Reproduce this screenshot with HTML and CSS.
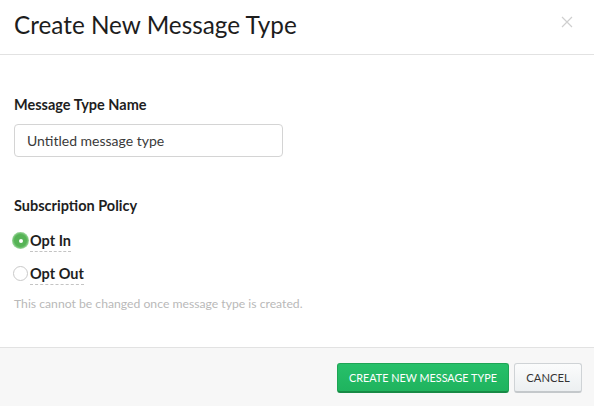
FILE: index.html
```html
<!DOCTYPE html>
<html>
<head>
<meta charset="utf-8">
<link rel="stylesheet" href="styles.css">
</head>
<body>
<div class="modal">
  <div class="header">
    <h1 class="title">Create New Message Type</h1>
    <button class="close" aria-label="Close">
      <svg width="12" height="12" viewBox="0 0 12 12"><path d="M1 1L11 11M11 1L1 11" stroke="#cfcfcf" stroke-width="1.2" fill="none"/></svg>
    </button>
  </div>
  <div class="body">
    <label class="field-label">Message Type Name</label>
    <div class="input">Untitled message type</div>
    <div class="field-label policy">Subscription Policy</div>
    <div class="radios">
      <div class="radio-row"><span class="radio checked"></span><span class="radio-label">Opt In</span></div>
      <div class="radio-row"><span class="radio"></span><span class="radio-label">Opt Out</span></div>
    </div>
    <p class="help">This cannot be changed once message type is created.</p>
  </div>
  <div class="footer">
    <button class="btn btn-primary">CREATE NEW MESSAGE TYPE</button>
    <button class="btn btn-default">CANCEL</button>
  </div>
</div>
</body>
</html>
```
FILE: styles.css
```css
html, body { margin: 0; padding: 0; background: #fff; }
body { font-family: Lato, "Open Sans", sans-serif; color: #222; width: 594px; height: 406px; overflow: hidden; }
.modal { display: flex; flex-direction: column; height: 406px; }
.header { height: 55px; border-bottom: 1px solid #e2e2e2; display: flex; align-items: flex-start; justify-content: space-between; box-sizing: border-box; }
.title { margin: 0; padding: 10px 0 0 14px; font-size: 24.3px; font-weight: 400; color: #1d1d1d; line-height: 30px; }
.close { background: none; border: 0; padding: 0; margin: 16px 21px 0 0; width: 12px; height: 12px; display: flex; }
.body { flex: 1; padding: 41px 14px 0 14px; }
.field-label { display: block; font-weight: 700; font-size: 14.5px; line-height: 18px; color: #1e1e1e; }
.input { margin-top: 10px; width: 269px; height: 33px; box-sizing: border-box; border: 1px solid #d4d4d4; border-radius: 4px; padding: 0 12px; font-size: 14px; line-height: 31px; color: #3a3a3a; }
.policy { margin-top: 40px; }
.radios { margin-top: 15px; display: flex; flex-direction: column; gap: 12px; }
.radio-row { display: flex; align-items: center; height: 21px; }
.radio { width: 13px; height: 13px; border-radius: 50%; border: 1px solid #c9c9c9; box-sizing: content-box; margin-right: 2px; margin-left: -1px; position: relative; background: #fff; }
.radio.checked { background: #56b356; border-color: #6cc06c; box-shadow: 0 0 0 1px #8fd08f; }
.radio.checked::after { content: ""; position: absolute; left: 4.5px; top: 4.5px; width: 4px; height: 4px; border-radius: 50%; background: #fff; }
.radio-label { font-weight: 700; font-size: 14.5px; line-height: 18px; color: #1e1e1e; border-bottom: 1px dashed #c4c4c4; padding-bottom: 1px; margin-top: 2px; }
.help { margin: 12px 0 0 0; font-size: 12.2px; color: #b9b9b9; line-height: 16px; }
.footer { height: 59px; box-sizing: border-box; border-top: 1px solid #e2e2e2; background: #f7f7f7; display: flex; justify-content: flex-end; align-items: flex-start; padding: 15px 12px 0 0; gap: 5px; }
.btn { font-family: Lato, "Open Sans", sans-serif; font-size: 11.2px; height: 30px; border-radius: 3px; padding: 0; cursor: pointer; white-space: nowrap; }
.btn-primary { width: 172px; font-size: 10.8px; background: linear-gradient(#27c06a, #1fb35e); color: #fff; border: 1px solid #1fa555; border-bottom: 2px solid #178a45; }
.btn-default { width: 68px; background: linear-gradient(#fbfcfc, #eceff1); color: #333; border: 1px solid #cfd3d6; border-bottom: 2px solid #c4c8cb; }
```
